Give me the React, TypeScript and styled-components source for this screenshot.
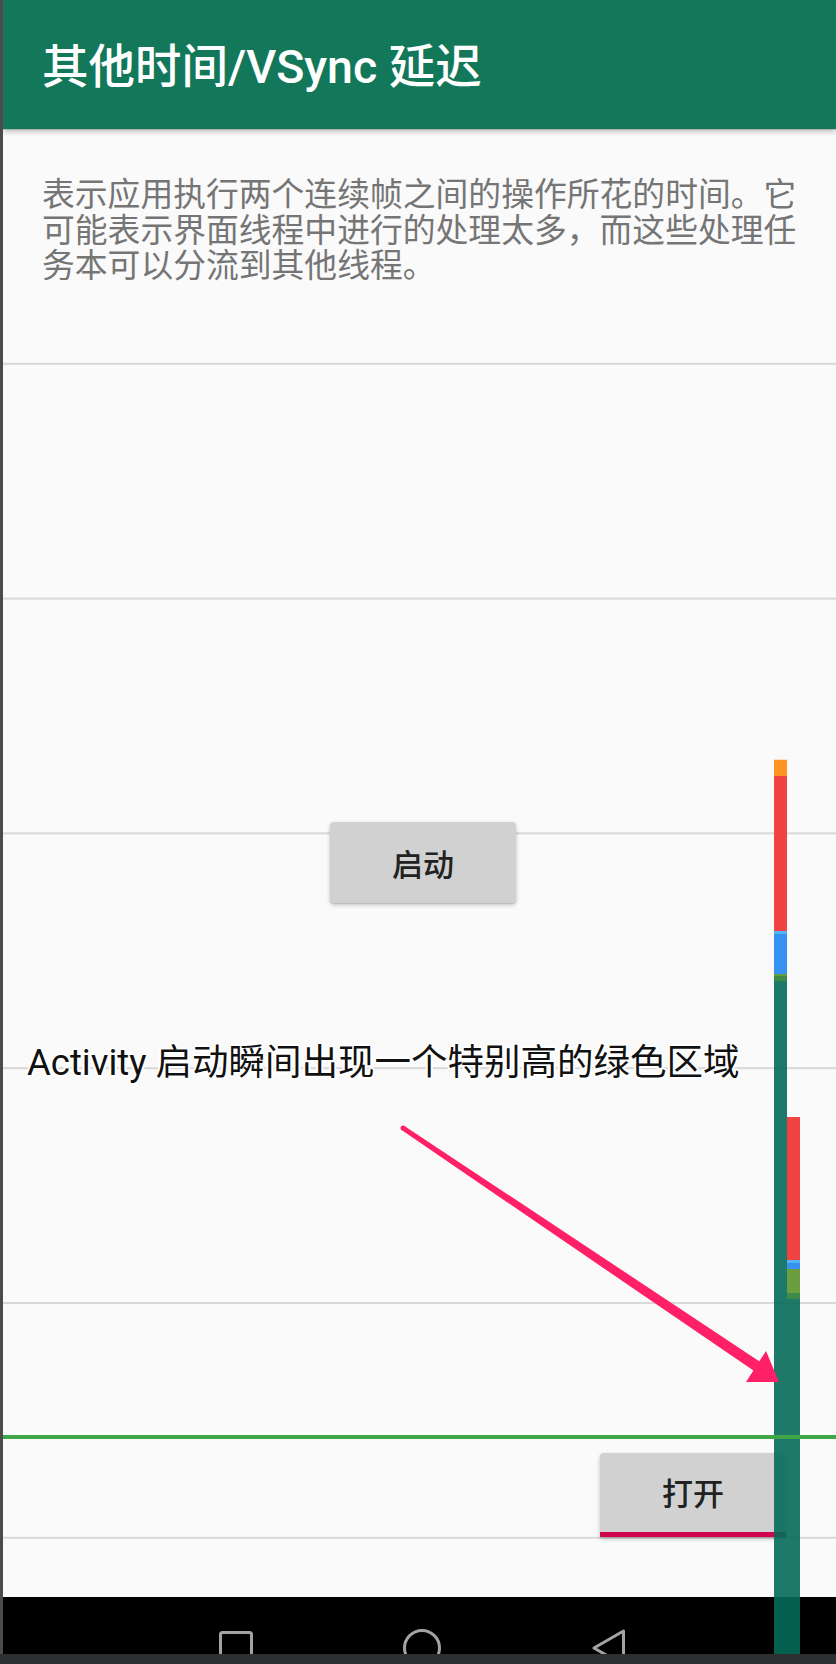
import React from "react";
import styled, { createGlobalStyle } from "styled-components";

const GlobalStyle = createGlobalStyle`
  html, body {
    margin: 0;
    padding: 0;
    background: #2e2f31;
  }
  body {
    width: 836px;
    height: 1664px;
    overflow: hidden;
    font-family: Roboto, "Noto Sans CJK SC", sans-serif;
  }
  * { box-sizing: border-box; }
`;

const Page = styled.div`
  width: 836px;
  height: 1664px;
  display: flex;
  flex-direction: column;
  background: #2e2f31;
`;

const Screen = styled.div`
  position: relative;
  height: 1654px;
  flex: none;
  display: flex;
  flex-direction: column;
  border-left: 3px solid #4b4b4b;
  background: #fafafa;
  overflow: hidden;
`;

const AppBar = styled.header`
  position: relative;
  z-index: 1;
  height: 129px;
  flex: none;
  display: flex;
  align-items: center;
  padding: 6px 0 0 39px;
  background: #13785a;
  box-shadow: 0 2px 6px rgba(0, 0, 0, 0.28);
`;

const Title = styled.h1`
  margin: 0;
  color: #ffffff;
  font-size: 46.5px;
  font-weight: 500;
  line-height: 1;
  white-space: nowrap;
`;

const Content = styled.main`
  position: relative;
  flex: 1;
  display: flex;
  flex-direction: column;
  align-items: flex-start;
  background-image: linear-gradient(to bottom, transparent 232.8px, #d8d8d8 232.8px);
  background-size: 100% 234.8px;
  background-position: 0 1px;
`;

const Description = styled.p`
  margin: 49px 0 0 39px;
  color: #757575;
  font-size: 32.8px;
  line-height: 35.5px;
  white-space: nowrap;
`;

const RaisedButton = styled.button<{ $top: number; $left: number; $underline?: boolean }>`
  margin: ${(p) => p.$top}px 0 0 ${(p) => p.$left}px;
  width: 186px;
  height: ${(p) => (p.$underline ? 84 : 81)}px;
  flex: none;
  display: flex;
  align-items: center;
  justify-content: center;
  padding: 0 0 ${(p) => (p.$underline ? 2 : 0)}px;
  border: none;
  border-bottom: ${(p) => (p.$underline ? "5px solid #d0044f" : "none")};
  border-radius: ${(p) => (p.$underline ? "4px 4px 0 0" : "4px")};
  background: #d0d1d0;
  box-shadow: 0 2px 4px rgba(0, 0, 0, 0.22), 0 1px 1px rgba(0, 0, 0, 0.1);
  color: #212121;
  font-family: Roboto, "Noto Sans CJK SC", sans-serif;
  font-size: 31px;
  font-weight: 500;
  letter-spacing: 0;
`;

const Annotation = styled.div`
  position: absolute;
  z-index: 4;
  left: 24px;
  top: 913px;
  color: #111111;
  font-size: 36.5px;
  line-height: 42px;
  white-space: nowrap;
  text-shadow:
    2px 0 0 #fff, -2px 0 0 #fff, 0 2px 0 #fff, 0 -2px 0 #fff,
    1.5px 1.5px 0 #fff, -1.5px 1.5px 0 #fff, 1.5px -1.5px 0 #fff, -1.5px -1.5px 0 #fff;
`;

const NavBar = styled.nav`
  height: 57px;
  flex: none;
  display: flex;
  align-items: flex-start;
  gap: 126px;
  padding-left: 203px;
  background: #000000;
  overflow: hidden;
`;

const NavIcon = styled.svg`
  width: 60px;
  height: 44px;
  margin-top: 30px;
  flex: none;
  fill: none;
  stroke: #a3a3a3;
  stroke-width: 3px;
  stroke-linejoin: round;
`;

const ProfileBars = styled.div`
  position: absolute;
  z-index: 2;
  left: 771px;
  bottom: 0;
  display: flex;
  align-items: flex-end;
  pointer-events: none;
`;

const Bar = styled.div<{ $height: number }>`
  width: 13px;
  height: ${(p) => p.$height}px;
  display: flex;
  flex-direction: column;
`;

const Segment = styled.div<{ $color: string; $h?: number }>`
  background: ${(p) => p.$color};
  ${(p) => (p.$h ? `height: ${p.$h}px; flex: none;` : "flex: 1;")}
`;

const ThresholdLine = styled.div`
  position: absolute;
  z-index: 3;
  left: 0;
  right: 0;
  top: 1435px;
  height: 4px;
  background: #3fa748;
  pointer-events: none;
`;

const ArrowLayer = styled.svg`
  position: absolute;
  z-index: 5;
  left: 0;
  top: 0;
  width: 833px;
  height: 1654px;
  pointer-events: none;
`;

const Strip = styled.div`
  height: 10px;
  flex: none;
  background: #2e2f31;
`;

const TEAL = "rgba(6, 106, 88, 0.9)";

type Seg = { color: string; h?: number };

const bar1: Seg[] = [
  { color: "rgba(255, 205, 160, 0.6)", h: 1 },
  { color: "#ff9421", h: 16 },
  { color: "#f24343", h: 155 },
  { color: "#50b5f6", h: 3 },
  { color: "#3791f1", h: 40 },
  { color: "#5e9f3e", h: 2 },
  { color: "#3d8b46", h: 5 },
  { color: TEAL },
];

const bar2: Seg[] = [
  { color: "#f24343", h: 143 },
  { color: "#50b5f6", h: 3 },
  { color: "#3791f1", h: 6 },
  { color: "#6a9e3f", h: 24 },
  { color: "#3f8a46", h: 6 },
  { color: TEAL },
];

export default function App() {
  return (
    <Page>
      <GlobalStyle />
      <Screen>
        <AppBar>
          <Title>其他时间/VSync 延迟</Title>
        </AppBar>
        <Content>
          <Description>
            表示应用执行两个连续帧之间的操作所花的时间。它
            <br />
            可能表示界面线程中进行的处理太多，而这些处理任
            <br />
            务本可以分流到其他线程。
          </Description>
          <RaisedButton $top={537} $left={327}>
            启动
          </RaisedButton>
          <RaisedButton $top={550} $left={597} $underline>
            打开
          </RaisedButton>
          <Annotation>Activity 启动瞬间出现一个特别高的绿色区域</Annotation>
        </Content>
        <NavBar>
          <NavIcon viewBox="0 0 60 44">
            <rect x="14.5" y="5.5" width="31" height="31" rx="2" />
          </NavIcon>
          <NavIcon viewBox="0 0 60 44">
            <circle cx="30" cy="21" r="17.5" />
          </NavIcon>
          <NavIcon viewBox="0 0 60 44">
            <path d="M16 21 L45.5 4 L45.5 38 Z" />
          </NavIcon>
        </NavBar>

        <ProfileBars>
          <Bar $height={1654 - 759}>
            {bar1.map((s, i) => (
              <Segment key={i} $color={s.color} $h={s.h} />
            ))}
          </Bar>
          <Bar $height={1654 - 1117}>
            {bar2.map((s, i) => (
              <Segment key={i} $color={s.color} $h={s.h} />
            ))}
          </Bar>
        </ProfileBars>
        <ThresholdLine />
        <ArrowLayer viewBox="3 0 833 1654">
          <polygon
            fill="#ff2068"
            points="404.4,1125.9 761.1,1362.4 754.9,1371.6 401.6,1130.1"
          />
          <circle cx="403" cy="1128" r="2.5" fill="#ff2068" />
          <polygon fill="#ff2068" points="766,1351 779,1382 746,1382" />
        </ArrowLayer>
      </Screen>
      <Strip />
    </Page>
  );
}
